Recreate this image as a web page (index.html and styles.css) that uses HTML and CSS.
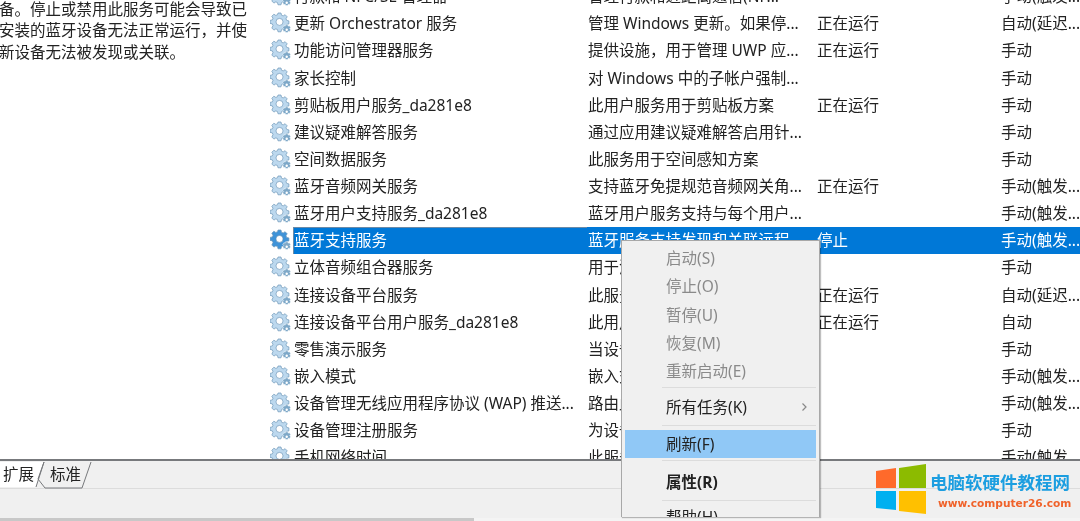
FILE: index.html
```html
<!DOCTYPE html>
<html lang="zh-CN">
<head>
    <meta charset="utf-8">
    <title>服务</title>
    <link rel="stylesheet" href="styles.css">
</head>
<body>
    <svg class="defs" width="0" height="0">
        <symbol id="gear" viewBox="0 0 22 22">
            <path d="M8 1h3l.5 2.2 1.7.7 1.900-1.200 2.100 2.100-1.200 1.900.7 1.700 2.200.5v3l-2.200.5-.7 1.700 1.200 1.900-2.100 2.100-1.900-1.200-1.700.7-.5 2.200H8l-.5-2.200-1.700-.7-1.900 1.200-2.100-2.100L3 13.600l-.7-1.700L.1 11.400V8.400L2.300 7.900 3 6.200 1.800 4.300 3.900 2.200 5.800 3.400 7.500 2.700z" fill="currentColor" stroke="#6d97b8" stroke-width=".7"/>
            <circle cx="9.500" cy="9.900" r="3.500" fill="#fff" stroke="#5f8cb0" stroke-width=".6"/>
            <path d="M15.500 12.800h2.400l.3 1.300 1.300-.4 1.200 2-1 1 1 1-1.200 2-1.300-.4-.3 1.300h-2.400l-.3-1.300-1.300.4-1.200-2 1-1-1-1 1.200-2 1.300.4z" fill="#7ea8c8" stroke="#fff" stroke-width=".5"/>
            <circle cx="16.700" cy="17.700" r="1.200" fill="#fff"/>
        </symbol>
    </svg>

    <div class="wrapper">
        <div class="main">
            <div class="desc">
                <p>备。停止或禁用此服务可能会导致已安装的蓝牙设备无法正常运行，并使新设备无法被发现或关联。</p>
            </div>
            <div class="list">
                <div class="row"><svg class="ico"><use href="#gear"/></svg><span class="name">付款和 NFC/SE 管理器</span><span>管理付款和近距离通信(NF...</span><span></span><span>手动(触发...</span></div>
                <div class="row"><svg class="ico"><use href="#gear"/></svg><span class="name">更新 Orchestrator 服务</span><span>管理 Windows 更新。如果停...</span><span>正在运行</span><span>自动(延迟...</span></div>
                <div class="row"><svg class="ico"><use href="#gear"/></svg><span class="name">功能访问管理器服务</span><span>提供设施，用于管理 UWP 应...</span><span>正在运行</span><span>手动</span></div>
                <div class="row"><svg class="ico"><use href="#gear"/></svg><span class="name">家长控制</span><span>对 Windows 中的子帐户强制...</span><span></span><span>手动</span></div>
                <div class="row"><svg class="ico"><use href="#gear"/></svg><span class="name">剪贴板用户服务_da281e8</span><span>此用户服务用于剪贴板方案</span><span>正在运行</span><span>手动</span></div>
                <div class="row"><svg class="ico"><use href="#gear"/></svg><span class="name">建议疑难解答服务</span><span>通过应用建议疑难解答启用针...</span><span></span><span>手动</span></div>
                <div class="row"><svg class="ico"><use href="#gear"/></svg><span class="name">空间数据服务</span><span>此服务用于空间感知方案</span><span></span><span>手动</span></div>
                <div class="row"><svg class="ico"><use href="#gear"/></svg><span class="name">蓝牙音频网关服务</span><span>支持蓝牙免提规范音频网关角...</span><span>正在运行</span><span>手动(触发...</span></div>
                <div class="row"><svg class="ico"><use href="#gear"/></svg><span class="name">蓝牙用户支持服务_da281e8</span><span>蓝牙用户服务支持与每个用户...</span><span></span><span>手动(触发...</span></div>
                <div class="row selected"><svg class="ico"><use href="#gear"/></svg><span class="name">蓝牙支持服务</span><span>蓝牙服务支持发现和关联远程...</span><span>停止</span><span>手动(触发...</span></div>
                <div class="row"><svg class="ico"><use href="#gear"/></svg><span class="name">立体音频组合器服务</span><span>用于添加</span><span></span><span>手动</span></div>
                <div class="row"><svg class="ico"><use href="#gear"/></svg><span class="name">连接设备平台服务</span><span>此服务用</span><span>正在运行</span><span>自动(延迟...</span></div>
                <div class="row"><svg class="ico"><use href="#gear"/></svg><span class="name">连接设备平台用户服务_da281e8</span><span>此用户服</span><span>正在运行</span><span>自动</span></div>
                <div class="row"><svg class="ico"><use href="#gear"/></svg><span class="name">零售演示服务</span><span>当设备处</span><span></span><span>手动</span></div>
                <div class="row"><svg class="ico"><use href="#gear"/></svg><span class="name">嵌入模式</span><span>嵌入式模</span><span></span><span>手动(触发...</span></div>
                <div class="row"><svg class="ico"><use href="#gear"/></svg><span class="name">设备管理无线应用程序协议 (WAP) 推送...</span><span>路由此设</span><span></span><span>手动(触发...</span></div>
                <div class="row"><svg class="ico"><use href="#gear"/></svg><span class="name">设备管理注册服务</span><span>为设备管</span><span></span><span>手动</span></div>
                <div class="row"><svg class="ico"><use href="#gear"/></svg><span class="name">手机网络时间</span><span>此服务将</span><span></span><span>手动(触发...</span></div>
            </div>
        </div>

        <div class="bottom">
            <div class="tabs">
                <svg class="tab-shape" width="100" height="28">
                    <polygon points="0,1 44,1 36,26 0,26" fill="#fff"/>
                    <polyline points="44,1 38,18 45,27 82,27 91,1" fill="none" stroke="#77797c"/>
                    <polyline points="44,1 36,26" fill="none" stroke="#77797c"/>
                </svg>
                <span class="tab">扩展</span>
                <span class="tab">标准</span>
            </div>
        </div>
        <div class="edge"><div class="edge-dark"></div></div>
    </div>

    <div class="menu">
        <div class="item off">启动(S)</div>
        <div class="item off">停止(O)</div>
        <div class="item off">暂停(U)</div>
        <div class="item off">恢复(M)</div>
        <div class="item off">重新启动(E)</div>
        <div class="sep"></div>
        <div class="item more">所有任务(K)<svg width="7" height="10"><polyline points="1.500,1.500 5,5 1.500,8.500" fill="none" stroke="#888" stroke-width="1.200"/></svg></div>
        <div class="sep"></div>
        <div class="item hot">刷新(F)</div>
        <div class="sep"></div>
        <div class="item bold">属性(R)</div>
        <div class="sep"></div>
        <div class="item help">帮助(H)</div>
    </div>

    <div class="logo">
        <svg width="52" height="52" viewBox="0 0 52 52">
            <polygon points="0,7 20,4 20,24 0,24" fill="#ff6a2b"/>
            <polygon points="23,4 50,0 50,24 23,24" fill="#8cbb00"/>
            <polygon points="0,27 20,27 20,46 0,44" fill="#00b0f0"/>
            <polygon points="23,27 50,27 50,50 23,47" fill="#ffc000"/>
        </svg>
        <div class="logo-text">
            <div class="logo-cn">电脑软硬件教程网</div>
            <div class="logo-url">www.computer26.com</div>
        </div>
    </div>
</body>
</html>
```

FILE: styles.css
```css
* {
    margin: 0;
    padding: 0;
    box-sizing: border-box;
}

html, body {
    height: 100%;
    overflow: hidden;
}

body {
    font-family: "Noto Sans", "Noto Sans CJK SC", sans-serif;
    font-size: 15.5px;
    color: #222;
    background: #fff;
    filter: blur(.35px);
}

.defs {
    display: block;
    height: 0;
}

.wrapper {
    height: 521px;
    display: flex;
    flex-direction: column;
}

.main {
    height: 459px;
    display: flex;
    overflow: hidden;
}

.desc {
    width: 262px;
    flex: none;
    line-height: 21.5px;
    margin-left: -1px;
    padding-right: 12px;
    margin-top: -1.500px;
}

.list {
    flex: 1;
    margin-top: -17.400px;
}

.row {
    height: 27.13px;
    display: grid;
    grid-template-columns: 32px 295px 229px 184px 1fr;
    align-items: center;
    white-space: nowrap;
    line-height: 26px;
}

.ico {
    width: 22px;
    height: 22px;
    margin-left: 9px;
    color: #bcd8ee;
}

.name {
    padding-left: 1px;
}

.selected {
    color: #fff;
}

.selected > span {
    background: #0078d7;
    height: 100%;
    padding-left: 1px;
    margin-left: -1px;
}

.selected .ico {
    color: #3f93d8;
}

.selected .name {
    margin-left: 0;
    padding-left: 1px;
    box-shadow: inset 1px 1px 0 #6a8aa8;
}

.bottom {
    height: 59px;
    flex: none;
    background: #f0f0f0;
    border-top: 2px solid #77797c;
}

.tabs {
    height: 28px;
    position: relative;
    display: flex;
    border-bottom: 1px solid #dcdcdc;
}

.tab-shape {
    position: absolute;
    left: 0;
    top: 0;
}

.tab {
    position: relative;
    line-height: 26px;
    width: 47px;
    padding-left: 3px;
}

.edge {
    flex: 1;
    background: #f4f4f4;
}

.edge-dark {
    width: 474px;
    height: 100%;
    background: #c8c8c8;
}

.menu {
    position: absolute;
    left: 621px;
    top: 240px;
    width: 199px;
    height: 277px;
    overflow: hidden;
    background: #f0f0f0;
    border: 1px solid #a8a8a8;
    border-bottom: 0;
    padding: 3px;
    box-shadow: 1px 1px 1px rgba(0, 0, 0, .25);
}

.item {
    height: 28.3px;
    line-height: 28px;
    padding-left: 41px;
    color: #222;
}

.off {
    color: #8a8a8a;
}

.more {
    display: flex;
    align-items: center;
    justify-content: space-between;
    padding-right: 8px;
    height: 32px;
    margin-top: 3px;
}

.hot {
    background: #90c8f6;
    height: 28px;
    margin-top: 3.500px;
}

.bold {
    font-weight: 700;
    height: 31px;
    line-height: 31px;
    margin-top: 6px;
}

.help {
    margin-top: 1px;
}

.sep {
    height: 1px;
    margin: 2px 0 2px 37px;
    background: #dcdcdc;
}

.logo {
    position: absolute;
    left: 876px;
    top: 464px;
    display: flex;
    gap: 2px;
}

.logo-text {
    padding-top: 6px;
    white-space: nowrap;
}

.logo-cn {
    font-size: 17.500px;
    line-height: 24px;
    font-weight: 700;
    color: #1c9ee0;
}

.logo-url {
    font-family: "DejaVu Sans", sans-serif;
    font-size: 10.6px;
    line-height: 19px;
    font-weight: 700;
    color: #f0622a;
    padding-left: 8px;
}
```
